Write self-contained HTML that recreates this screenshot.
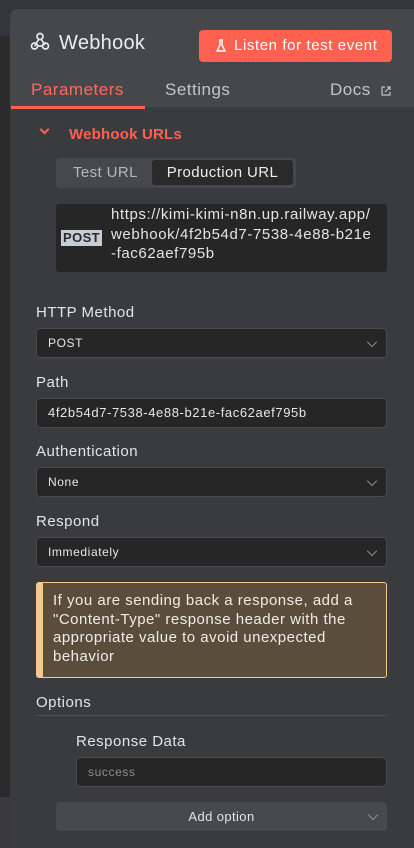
<!DOCTYPE html>
<html><head><meta charset="utf-8"><style>
*{box-sizing:border-box;margin:0;padding:0}
html,body{width:414px;height:848px;overflow:hidden}
body{background:#2a2a2c;font-family:"Liberation Sans",sans-serif;position:relative;color:#e8e8ea;letter-spacing:0.4px}
.top{position:absolute;left:0;top:0;width:414px;height:36px;background:#35353d}
.left{position:absolute;left:0;top:36px;width:11px;height:812px;background:#2b2b2b}
.leftb{position:absolute;left:0;top:797px;width:11px;height:51px;background:#3a3a3e}
.panel{position:absolute;left:10px;top:9px;width:404px;height:839px;background:#3a3b3f;border-radius:8px 0 0 0;overflow:hidden}
.head{position:absolute;left:0;top:0;width:100%;height:98px;background:#46474b}
.abs{position:absolute}
.lbl{position:absolute;left:26px;font-size:15px;color:#e4e4e6;letter-spacing:0.5px}
.inp{position:absolute;left:26px;width:351px;height:30px;background:#262626;border:1px solid #4a4a4e;border-radius:4px;font-size:12px;color:#e6e6e6;padding-left:11px;line-height:28px;letter-spacing:0.6px}
.chev{position:absolute;right:10px;top:9px;width:8px;height:8px;border-right:1.3px solid #9a9a9e;border-bottom:1.3px solid #9a9a9e;transform:rotate(45deg) scale(0.9)}
</style></head><body>
<div class="top"></div><div class="left"></div><div class="leftb"></div>
<div class="panel">
 <div class="head"></div>
 <svg class="abs" style="left:20px;top:23px" width="20" height="19" viewBox="0 0 20 19" fill="none" stroke="#e8e8ea" stroke-width="1.7" stroke-linecap="round"><circle cx="10" cy="4.5" r="3"/><path d="M8.5 7.5L5 13.5"/><circle cx="4.5" cy="14" r="3"/><path d="M11.5 7.5L14.5 12.5"/><circle cx="15.5" cy="14" r="3"/><path d="M7.5 14h5"/></svg>
 <div class="abs" style="left:49px;top:23px;font-size:20px;color:#ececee;letter-spacing:0.3px">Webhook</div>
 <div class="abs" style="left:189px;top:21px;width:193px;height:32px;background:#ff6150;border-radius:4px;color:#fff;font-size:15px;line-height:32px;padding-left:35px;letter-spacing:0.6px">Listen for test event</div>
 <svg class="abs" style="left:205px;top:30px" width="12" height="14" viewBox="0 0 12 14" fill="none" stroke="#fff" stroke-width="1.4"><path d="M4 1h4M5 1v5L2 12h8L7 6V1"/></svg>
 <div class="abs" style="left:21px;top:71px;font-size:17px;color:#ff6a58;letter-spacing:0.5px">Parameters</div>
 <div class="abs" style="left:155px;top:71px;font-size:17px;color:#c4c4c8;letter-spacing:0.5px">Settings</div>
 <div class="abs" style="left:320px;top:71px;font-size:17px;color:#c4c4c8;letter-spacing:0.5px">Docs</div>
 <svg class="abs" style="left:371px;top:77px" width="10" height="10" viewBox="0 0 10 10" fill="none" stroke="#c4c4c8" stroke-width="1.2"><path d="M4 1H1v8h8V6M6 1h3v3M9 1L4 6"/></svg>
 <div class="abs" style="left:1px;top:97px;width:134px;height:3px;background:#ff6150"></div>
 <div class="abs" style="left:31px;top:117px;width:7px;height:7px;border-right:2px solid #ff6150;border-bottom:2px solid #ff6150;transform:rotate(45deg)"></div>
 <div class="abs" style="left:59px;top:117px;font-size:15px;font-weight:bold;color:#ff6150;letter-spacing:0.2px">Webhook URLs</div>
 <div class="abs" style="left:46px;top:149px;width:240px;height:30px;background:#47484c;border-radius:4px"></div>
 <div class="abs" style="left:63px;top:155px;font-size:15px;color:#b8b8bc">Test URL</div>
 <div class="abs" style="left:142px;top:151px;width:141px;height:25px;background:#2a2a2a;border-radius:3px;font-size:15px;color:#ececec;line-height:25px;text-align:center">Production URL</div>
 <div class="abs" style="left:46px;top:195px;width:331px;height:68px;background:#262626;border-radius:3px"></div>
 <div class="abs" style="left:51px;top:221px;background:#c8ccd4;color:#2a2a2a;font-size:13px;font-weight:bold;padding:0 2px;line-height:16px">POST</div>
 <div class="abs" style="left:101px;top:196px;font-size:15px;line-height:19.5px;color:#e4e4e6;letter-spacing:0.6px;white-space:nowrap">https://kimi-kimi-n8n.up.railway.app/<br>webhook/4f2b54d7-7538-4e88-b21e<br>-fac62aef795b</div>
 <div class="lbl" style="top:295px">HTTP Method</div>
 <div class="inp" style="top:319px">POST<div class="chev"></div></div>
 <div class="lbl" style="top:365px">Path</div>
 <div class="inp" style="top:389px;font-size:13px">4f2b54d7-7538-4e88-b21e-fac62aef795b</div>
 <div class="lbl" style="top:434px">Authentication</div>
 <div class="inp" style="top:458px">None<div class="chev"></div></div>
 <div class="lbl" style="top:504px">Respond</div>
 <div class="inp" style="top:528px">Immediately<div class="chev"></div></div>
 <div class="abs" style="left:26px;top:573px;width:351px;height:96px;background:#5a4d3c;border:1px solid #f2c98e;border-left:7px solid #f2c98e;border-radius:3px;padding:9px 0 0 10px;font-size:15px;line-height:18.7px;color:#f0ece6;letter-spacing:0.5px;white-space:nowrap">If you are sending back a response, add a<br>"Content-Type" response header with the<br>appropriate value to avoid unexpected<br>behavior</div>
 <div class="lbl" style="top:685px">Options</div>
 <div class="abs" style="left:26px;top:706px;width:351px;height:1px;background:#505054"></div>
 <div class="abs" style="left:66px;top:724px;font-size:15px;color:#e4e4e6;letter-spacing:0.5px">Response Data</div>
 <div class="inp" style="left:66px;width:311px;top:748px;color:#8e8e92">success</div>
 <div class="abs" style="left:46px;top:793px;width:331px;height:29px;background:#48494d;border-radius:4px;font-size:13px;line-height:29px;text-align:center;color:#e4e4e6">Add option<div class="chev"></div></div>
</div>
</body></html>
